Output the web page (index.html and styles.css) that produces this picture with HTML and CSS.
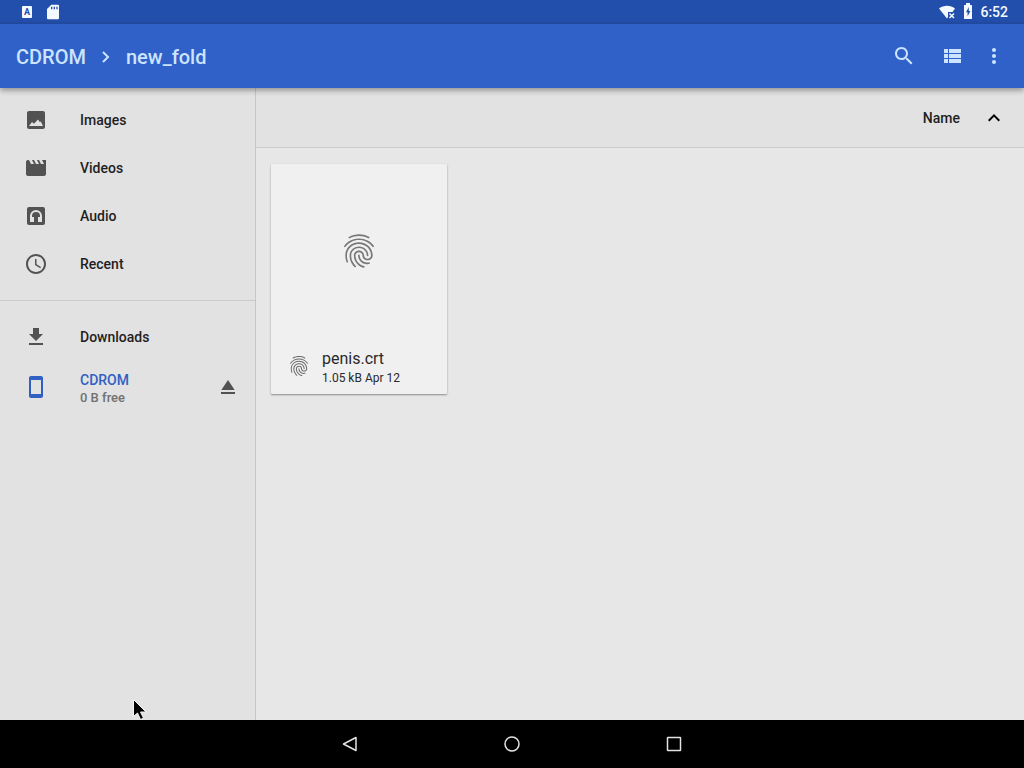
FILE: index.html
```html
<!DOCTYPE html>
<html lang="en">
<head>
<meta charset="utf-8">
<meta name="viewport" content="width=device-width, initial-scale=1">
<title>Files - new_fold</title>
<link rel="stylesheet" href="styles.css">
</head>
<body>
<svg class="defs" aria-hidden="true">
  <symbol id="fingerprint" viewBox="0 0 24 24"><path d="M17.81 4.47c-.08 0-.16-.02-.23-.06C15.66 3.42 14 3 12.01 3c-1.98 0-3.86.47-5.57 1.41-.24.13-.54.04-.68-.2-.13-.24-.04-.55.2-.68C7.82 2.52 9.86 2 12.01 2c2.13 0 3.99.47 6.03 1.52.25.13.34.43.21.67-.09.18-.26.28-.44.28zM3.5 9.72c-.1 0-.2-.03-.29-.09-.23-.16-.28-.47-.12-.7.99-1.4 2.25-2.5 3.75-3.27C9.98 4.04 14 4.03 17.15 5.65c1.5.77 2.76 1.86 3.75 3.25.16.22.11.54-.12.7-.23.16-.54.11-.7-.12-.9-1.26-2.04-2.25-3.39-2.94-2.87-1.47-6.54-1.47-9.4.01-1.36.7-2.5 1.7-3.4 2.96-.08.14-.23.21-.39.21zm6.25 12.07c-.13 0-.26-.05-.35-.15-.87-.87-1.34-1.43-2.01-2.64-.69-1.23-1.05-2.73-1.05-4.34 0-2.97 2.54-5.39 5.66-5.39s5.66 2.42 5.66 5.39c0 .28-.22.5-.5.5s-.5-.22-.5-.5c0-2.42-2.09-4.39-4.66-4.39-2.57 0-4.66 1.97-4.66 4.39 0 1.44.32 2.77.93 3.85.64 1.15 1.08 1.64 1.85 2.42.19.2.19.51 0 .71-.11.1-.24.15-.37.15zm7.17-1.85c-1.19 0-2.24-.3-3.1-.89-1.49-1.01-2.38-2.65-2.38-4.39 0-.28.22-.5.5-.5s.5.22.5.5c0 1.41.72 2.74 1.94 3.56.71.48 1.54.71 2.54.71.24 0 .64-.03 1.04-.1.27-.05.53.13.58.41.05.27-.13.53-.41.58-.57.11-1.07.12-1.21.12zM14.91 22c-.04 0-.09-.01-.13-.02-1.59-.44-2.63-1.03-3.72-2.1-1.4-1.39-2.17-3.24-2.17-5.22 0-1.62 1.38-2.94 3.08-2.94 1.7 0 3.08 1.32 3.08 2.94 0 1.07.93 1.94 2.08 1.94s2.08-.87 2.08-1.94c0-3.77-3.25-6.83-7.25-6.83-2.84 0-5.44 1.58-6.61 4.03-.39.81-.59 1.76-.59 2.8 0 .78.07 2.01.67 3.61.1.26-.03.55-.29.64-.26.1-.55-.04-.64-.29-.49-1.31-.73-2.61-.73-3.96 0-1.2.23-2.29.68-3.24 1.33-2.79 4.28-4.6 7.51-4.6 4.55 0 8.25 3.51 8.25 7.83 0 1.62-1.38 2.94-3.08 2.94s-3.08-1.32-3.08-2.94c0-1.07-.93-1.94-2.08-1.94s-2.08.87-2.08 1.94c0 1.71.66 3.31 1.87 4.51.95.94 1.86 1.46 3.27 1.85.27.07.42.35.35.61-.05.23-.26.38-.47.38z"/></symbol>
</svg>

<div class="status-bar">
  <div class="status-group">
    <span class="keyboard-badge">A</span>
    <svg class="icon-status" viewBox="0 0 24 24"><path fill-rule="evenodd" d="M19 1H9.500L3 7.500V21c0 1.300.900 2 2 2h14c1.300 0 2-.700 2-2V3c0-1.300-.700-2-2-2zM9 4h2v4H9zm4 0h2v4h-2zm4 0h2v4h-2z"/></svg>
  </div>
  <div class="status-group status-right">
    <svg class="icon-wifi" viewBox="0 0 18 16"><path d="M1 4.500C5.500.800 12.500.800 17 4.500L14.500 8H10v5l-1 1.500z"/><path class="wifi-x" d="M11.500 9.500l4.500 4.500M16 9.500L11.500 14"/></svg>
    <svg class="icon-battery" viewBox="0 0 10 16"><path fill-rule="evenodd" d="M3 0h4v2h1.500q.5 0 .5.500v13q0 .5-.5.500h-7q-.5 0-.5-.5v-13q0-.5.5-.5H3zM5.800 4L3 9.300h1.600v4L7.400 8H5.800z"/></svg>
    <span class="clock">6:52</span>
  </div>
</div>

<header class="app-bar">
  <nav class="breadcrumb" aria-label="Path">
    <a href="#cdrom">CDROM</a>
    <svg class="crumb-arrow" viewBox="0 0 10 14"><path d="M2 2l5 5-5 5"/></svg>
    <a href="#new_fold" aria-current="page">new_fold</a>
  </nav>
  <div class="actions">
    <button type="button" aria-label="Search"><svg class="icon" viewBox="0 0 24 24"><path d="M15.500 14h-.790l-.280-.270C15.410 12.590 16 11.110 16 9.500 16 5.910 13.090 3 9.500 3S3 5.910 3 9.500 5.910 16 9.500 16c1.610 0 3.090-.590 4.230-1.570l.270.280v.790l5 4.990L20.490 19l-4.990-5zm-6 0C7.010 14 5 11.990 5 9.500S7.010 5 9.500 5 14 7.010 14 9.500 11.990 14 9.500 14z"/></svg></button>
    <button type="button" aria-label="List view"><svg class="icon" viewBox="0 0 24 24"><path d="M4 14h4v-4H4v4zm0 5h4v-4H4v4zM4 9h4V5H4v4zm5 5h12v-4H9v4zm0 5h12v-4H9v4zM9 5v4h12V5H9z"/></svg></button>
    <button type="button" class="more" aria-label="More options"><svg class="icon" viewBox="0 0 24 24"><path d="M12 8c1.100 0 2-.900 2-2s-.900-2-2-2-2 .900-2 2 .900 2 2 2zm0 2c-1.100 0-2 .900-2 2s.900 2 2 2 2-.900 2-2-.900-2-2-2zm0 6c-1.100 0-2 .900-2 2s.900 2 2 2 2-.900 2-2-.900-2-2-2z"/></svg></button>
  </div>
</header>

<div class="workspace">
  <aside class="sidebar">
    <nav class="roots" aria-label="Media">
      <a class="root" href="#images"><svg class="icon" viewBox="0 0 24 24"><path d="M21 19V5c0-1.100-.900-2-2-2H5c-1.100 0-2 .900-2 2v14c0 1.100.900 2 2 2h14c1.100 0 2-.900 2-2zM5 18l3-4 2 1.800 4-4.300 1.800 2.500 1-.500L19 18z"/></svg><span>Images</span></a>
      <a class="root" href="#videos"><svg class="icon" viewBox="0 0 24 24"><path d="M18 4l2 4h-3l-2-4h-2l2 4h-3l-2-4H8l2 4H7L5 4H4c-1.100 0-1.990.900-1.990 2L2 18c0 1.100.900 2 2 2h16c1.100 0 2-.900 2-2V4h-4z"/></svg><span>Videos</span></a>
      <a class="root" href="#audio"><svg class="icon" viewBox="0 0 24 24"><path fill-rule="evenodd" d="M5 3h14q2 0 2 2v14q0 2-2 2H5q-2 0-2-2V5q0-2 2-2zM6 12v6h4v-5H8v-1a4 4 0 0 1 8 0v1h-2v5h4v-6a6 6 0 0 0-12 0z"/></svg><span>Audio</span></a>
      <a class="root" href="#recent"><svg class="icon" viewBox="0 0 24 24"><path d="M11.990 2C6.470 2 2 6.480 2 12s4.470 10 9.990 10C17.520 22 22 17.520 22 12S17.520 2 11.990 2zM12 20c-4.420 0-8-3.580-8-8s3.580-8 8-8 8 3.580 8 8-3.580 8-8 8zm.500-13H11v6l5.250 3.150.750-1.230-4.500-2.670z"/></svg><span>Recent</span></a>
    </nav>
    <nav class="roots storage" aria-label="Storage">
      <a class="root" href="#downloads"><svg class="icon" viewBox="0 0 24 24"><path d="M19 9h-4V3H9v6H5l7 7 7-7zM5 18v2h14v-2H5z"/></svg><span>Downloads</span></a>
      <div class="volume">
        <a class="root selected" href="#cdrom"><svg class="icon" viewBox="0 0 24 24"><path d="M17 1.010L7 1c-1.100 0-2 .900-2 2v18c0 1.100.900 2 2 2h10c1.100 0 2-.900 2-2V3c0-1.100-.900-1.990-2-1.990zM17 19H7V5h10v14z"/></svg><span class="root-text"><span>CDROM</span><span class="free">0 B free</span></span></a>
        <button type="button" class="eject" aria-label="Eject CDROM"><svg class="icon" viewBox="0 0 24 24"><path d="M5 17h14v2H5zm7-12L5.330 15h13.340z"/></svg></button>
      </div>
    </nav>
  </aside>

  <main class="content">
    <div class="sort-bar">
      <button type="button" class="sort"><span>Name</span><svg class="icon" viewBox="0 0 24 24"><path d="M12 8l-6 6 1.410 1.410L12 10.830l4.590 4.580L18 14z"/></svg></button>
    </div>
    <div class="files">
      <article class="file">
        <div class="preview"><svg class="icon-large"><use href="#fingerprint"/></svg></div>
        <div class="file-info">
          <svg class="icon"><use href="#fingerprint"/></svg>
          <div class="file-text">
            <div class="file-name">penis.crt</div>
            <div class="file-meta">1.05 kB Apr 12</div>
          </div>
        </div>
      </article>
    </div>
  </main>
</div>

<footer class="nav-bar">
  <button type="button" aria-label="Back"><svg class="icon" viewBox="0 0 24 24"><path d="M18 5.500v13L5.500 12z"/></svg></button>
  <button type="button" aria-label="Home"><svg class="icon" viewBox="0 0 24 24"><circle cx="12" cy="12" r="7"/></svg></button>
  <button type="button" aria-label="Overview"><svg class="icon" viewBox="0 0 24 24"><rect x="5.500" y="5.500" width="13" height="13" rx=".5"/></svg></button>
</footer>

<svg class="pointer" viewBox="0 0 16 24" aria-hidden="true"><path d="M1.500 1.500v17l4-3.500 3 6.500 3-1.400-3-6.100h5.500z"/></svg>
</body>
</html>
```

FILE: styles.css
```css
* { box-sizing: border-box; }

body {
  margin: 0;
  min-height: 100vh;
  display: flex;
  flex-direction: column;
  font-family: Roboto, "Noto Sans", sans-serif;
  font-size: 14px;
  font-weight: 500;
  color: #1f1f1f;
  background: #e7e7e7;
}

a { color: inherit; text-decoration: none; }

button {
  display: flex;
  align-items: center;
  justify-content: center;
  margin: 0;
  padding: 0;
  border: 0;
  background: none;
  color: inherit;
  font: inherit;
  cursor: pointer;
}

svg { display: block; flex: none; fill: currentColor; }

.defs { position: absolute; width: 0; height: 0; }
.icon { width: 24px; height: 24px; }

.status-bar {
  height: 24px;
  padding: 0 16px 0 22px;
  display: flex;
  align-items: center;
  justify-content: space-between;
  background: #234fac;
  color: #f4f9ff;
}

.status-group { display: flex; align-items: center; gap: 13px; }
.status-right { gap: 7px; }

.keyboard-badge {
  width: 10px;
  height: 12px;
  border-radius: 1px;
  background: #f4f9ff;
  color: #234fac;
  font-size: 9px;
  font-weight: 700;
  line-height: 12px;
  text-align: center;
}

.icon-status { width: 16px; height: 16px; }
.icon-wifi { width: 18px; height: 16px; }
.icon-battery { width: 10px; height: 16px; margin-bottom: 2px; }
.wifi-x { fill: none; stroke: currentColor; stroke-width: 1.500; }
.clock { font-size: 14px; line-height: 24px; }

.app-bar {
  position: relative;
  z-index: 1;
  height: 64px;
  padding: 0 12px 0 16px;
  display: flex;
  align-items: center;
  justify-content: space-between;
  background: #2f61c8;
  color: #cce4ff;
  box-shadow: 0 2px 6px rgba(0, 0, 0, 0.4);
}

.breadcrumb {
  padding-top: 2px;
  display: flex;
  align-items: center;
  gap: 15px;
  font-size: 20px;
  line-height: 28px;
}

.crumb-arrow { width: 10px; height: 14px; fill: none; stroke: currentColor; stroke-width: 2; }

.actions { display: flex; }
.actions button { width: 48px; height: 48px; }
.actions .more { width: 36px; }

.workspace { flex: 1; display: flex; }

.sidebar {
  flex: none;
  width: 256px;
  border-right: 1px solid #c6c6c6;
  background: #e2e2e2;
}

.roots { padding: 8px 0 12px; }
.storage { padding-top: 12px; border-top: 1px solid #cacaca; }

.root {
  flex: 1;
  min-height: 48px;
  padding-left: 24px;
  display: flex;
  align-items: center;
  gap: 32px;
}

.root .icon, .eject { color: #525252; }
.root.selected, .root.selected .icon { color: #3060c4; }

.volume { display: flex; align-items: center; min-height: 52px; }
.eject { width: 54px; height: 48px; }
.root-text { padding-top: 3px; display: flex; flex-direction: column; line-height: 18px; }
.free { color: #727272; font-size: 13px; }

.content { flex: 1; min-width: 0; }

.sort-bar {
  height: 60px;
  padding: 0 18px;
  display: flex;
  justify-content: flex-end;
  border-bottom: 1px solid #cbcbcb;
  background: #e2e2e2;
}

.sort { gap: 22px; }
.sort .icon { color: #000; }

.files {
  padding: 16px 15px;
  display: grid;
  grid-template-columns: repeat(auto-fill, 176px);
  gap: 16px;
}

.file {
  background: #f0f0f0;
  border-radius: 1px;
  box-shadow: 0 1px 2px rgba(0, 0, 0, 0.4);
}

.preview {
  height: 174px;
  display: flex;
  align-items: center;
  justify-content: center;
  color: #777;
}

.icon-large { width: 40px; height: 40px; }

.file-info {
  height: 56px;
  padding-left: 16px;
  display: flex;
  align-items: center;
  gap: 11px;
}

.file-info .icon { color: #6b6b6b; }
.file-text { padding-top: 4px; }
.file-name { font-size: 16px; font-weight: 400; line-height: 20px; color: #2a2a2a; }
.file-meta { font-size: 12px; font-weight: 400; line-height: 18px; color: #2a2a2a; }

.nav-bar {
  height: 48px;
  display: flex;
  align-items: center;
  justify-content: center;
  gap: 82px;
  background: #000;
  color: #e4e4e4;
}

.nav-bar button { width: 80px; height: 48px; }
.nav-bar .icon { fill: none; stroke: currentColor; stroke-width: 1.500; stroke-linejoin: round; }

.pointer {
  position: absolute;
  left: 132px;
  top: 698px;
  z-index: 2;
  width: 16px;
  height: 24px;
  fill: #000;
  stroke: #f4f4f4;
  stroke-width: 1;
}
```
